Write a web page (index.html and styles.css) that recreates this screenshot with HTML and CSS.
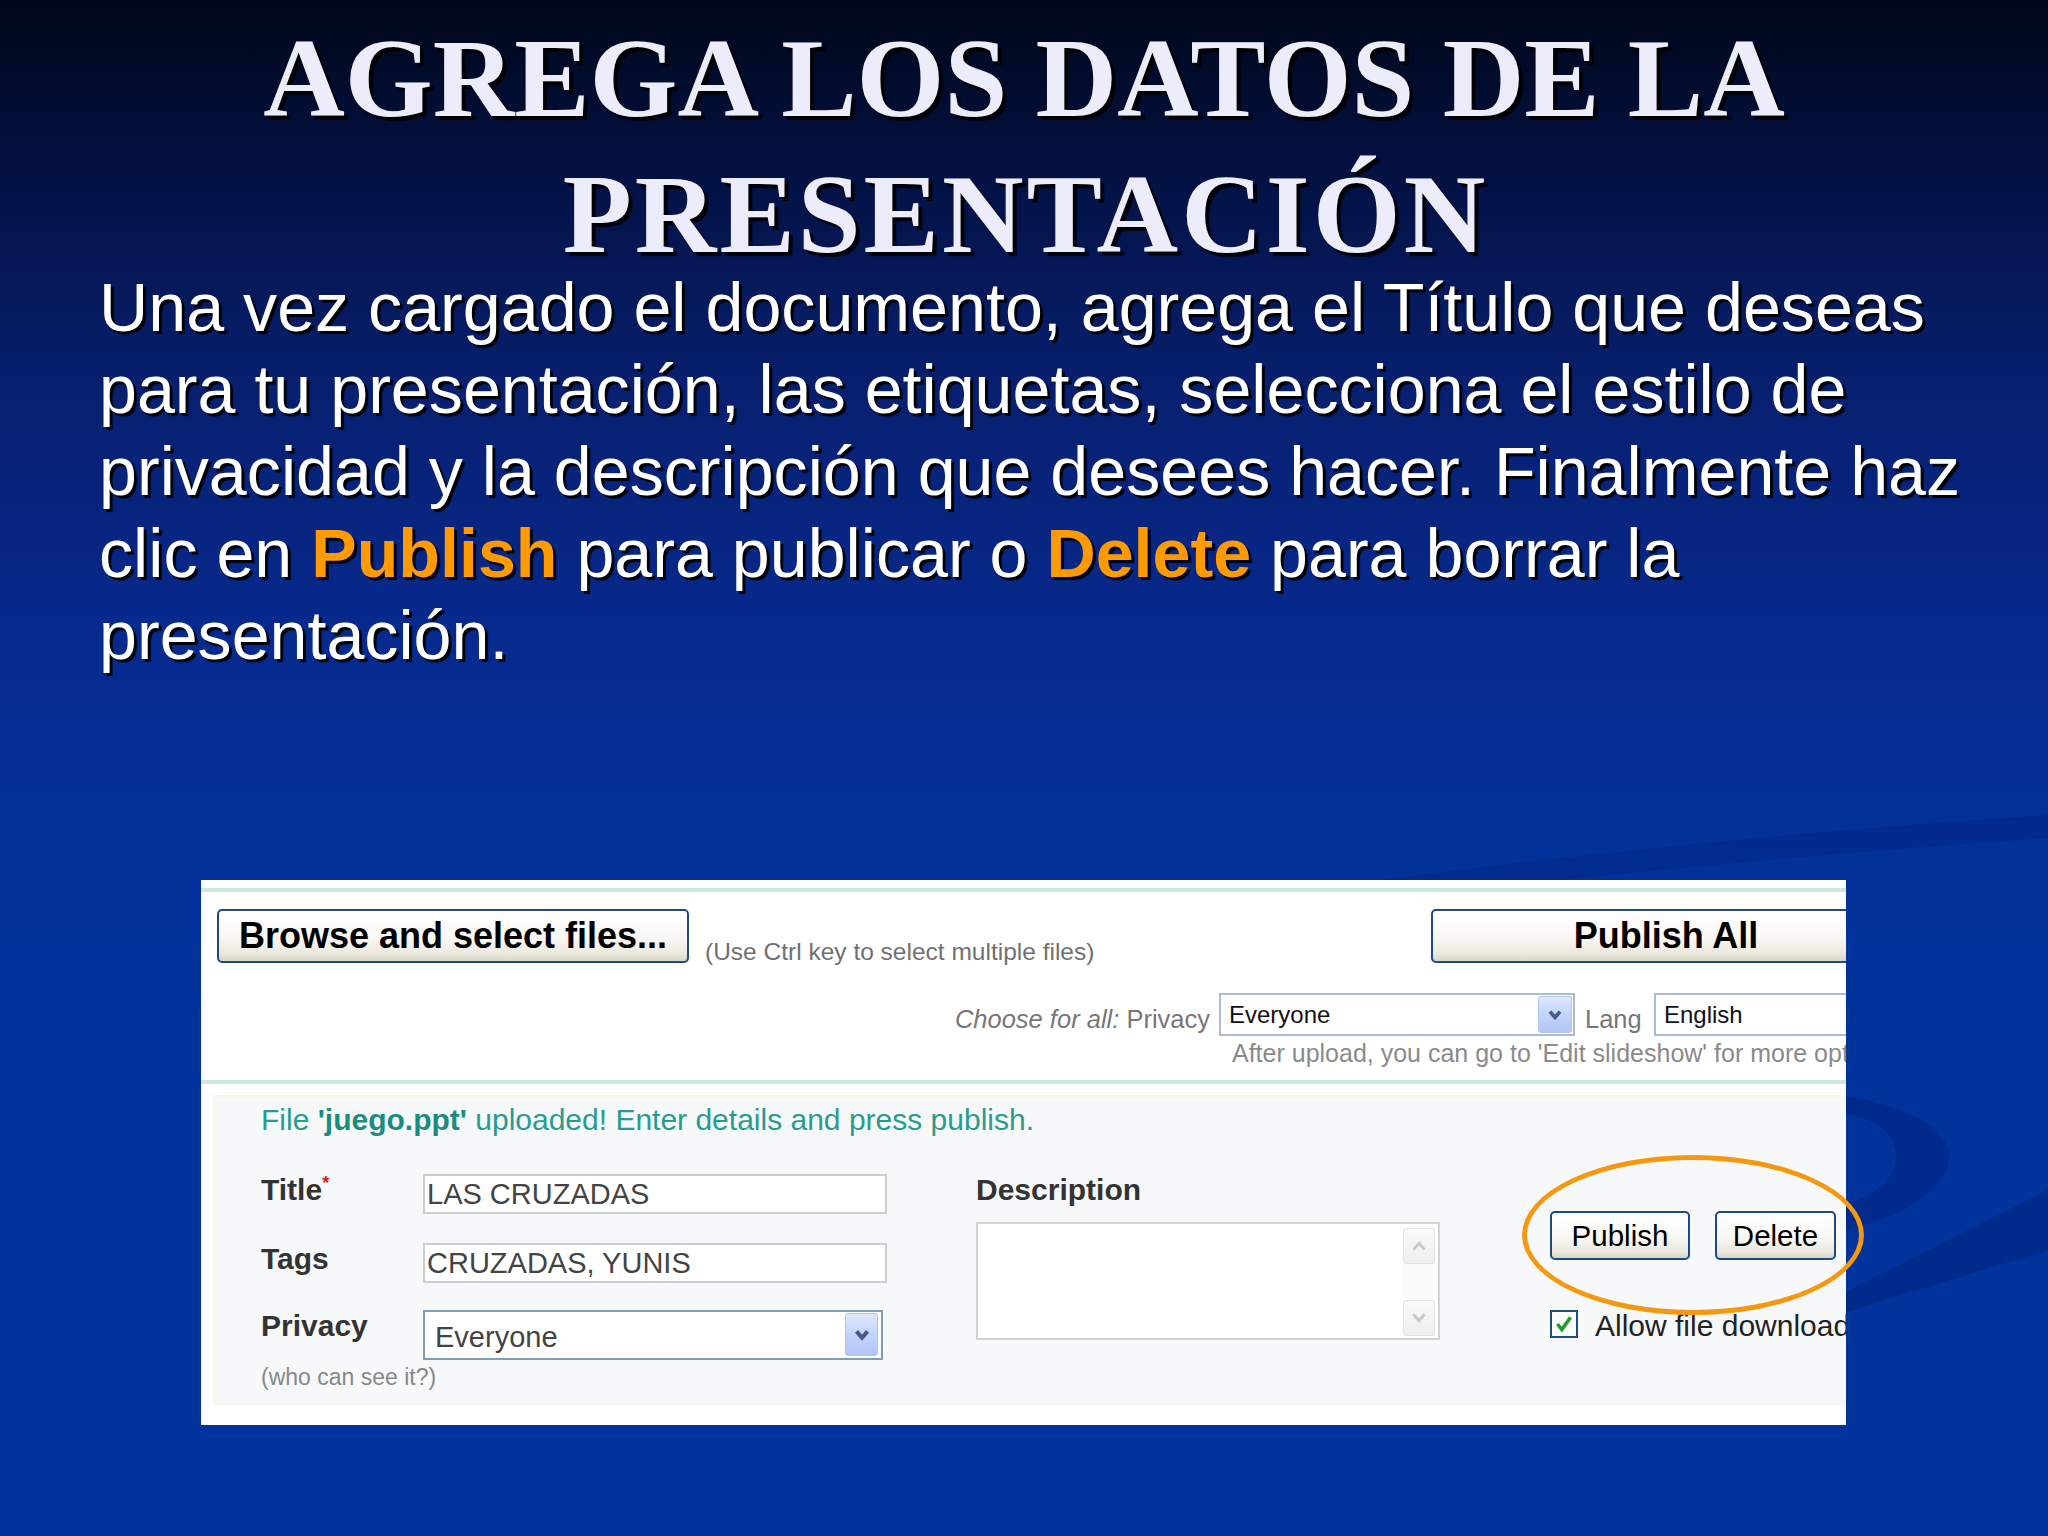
FILE: index.html
```html
<!DOCTYPE html>
<html lang="es">
<head>
<meta charset="utf-8">
<title>Agrega los datos de la presentación</title>
<link rel="stylesheet" href="styles.css">
</head>
<body>
<div class="slide">
  <svg class="swoosh" viewBox="0 0 2048 1536" width="2048" height="1536" aria-hidden="true">
    <path d="M1380 880 Q1700 838 2048 815 L2048 838 Q1700 862 1380 900 Z" fill="#001d78" opacity="0.3"/>
    <path d="M1846 1096 C1935 1110 1975 1150 1932 1190 C1910 1210 1880 1222 1846 1230 L1846 1205 C1872 1196 1895 1180 1896 1158 C1897 1132 1872 1118 1846 1114 Z" fill="#00237e" opacity="0.5"/>
    <path d="M1846 1292 L2048 1190 L2048 1250 L1846 1312 Z" fill="#00267f" opacity="0.6"/>
  </svg>

  <h1 class="title">AGREGA LOS DATOS DE LA<br><span class="title-wide">PRESENTACIÓN</span></h1>

  <p class="lead">Una vez cargado el documento, agrega el Título que deseas<br>para tu presentación, las etiquetas, selecciona el estilo de<br>privacidad y la descripción que desees hacer. Finalmente haz<br>clic en <b class="hl">Publish</b> para publicar o <b class="hl">Delete</b> para borrar la<br>presentación.</p>

  <div class="panel">
    <div class="head">
      <div class="row1">
        <span class="btn btn-big btn-browse">Browse and select files...</span>
        <span class="hint">(Use Ctrl key to select multiple files)</span>
        <span class="btn btn-big btn-all">Publish All</span>
      </div>
      <div class="row2">
        <span class="choose"><i>Choose for all:</i> Privacy</span>
        <span class="select sel-top sel-priv">
          <span class="sel-text">Everyone</span>
          <span class="drop drop-top"><svg viewBox="0 0 12 12" width="20" height="20"><polyline points="3,4 6,7.5 9,4" fill="none" stroke="#46598a" stroke-width="2.2"/></svg></span>
        </span>
        <span class="lang">Lang</span>
        <span class="select sel-top sel-lang"><span class="sel-text">English</span></span>
      </div>
      <div class="row3">After upload, you can go to 'Edit slideshow' for more options</div>
    </div>

    <div class="lower">
      <div class="box">
        <div class="status">File <b>'juego.ppt'</b> uploaded! Enter details and press publish.</div>
        <div class="form">
          <div class="col-fields">
            <div class="field">
              <span class="label">Title<sup class="req">*</sup></span>
              <span class="input">LAS CRUZADAS</span>
            </div>
            <div class="field field-gap">
              <span class="label">Tags</span>
              <span class="input">CRUZADAS, YUNIS</span>
            </div>
            <div class="field field-gap2">
              <span class="label">Privacy</span>
              <span class="select sel-form">
                <span class="sel-text">Everyone</span>
                <span class="drop drop-form"><svg viewBox="0 0 12 12" width="22" height="22"><polyline points="3,4 6,7.5 9,4" fill="none" stroke="#46598a" stroke-width="2.2"/></svg></span>
              </span>
            </div>
            <div class="who">(who can see it?)</div>
          </div>

          <div class="col-desc">
            <div class="label">Description</div>
            <div class="textarea">
              <div class="scroll">
                <span class="sbtn sbtn-up"><svg viewBox="0 0 12 12" width="22" height="22"><polyline points="3,8 6,4.5 9,8" fill="none" stroke="#c9c9c9" stroke-width="1.6"/></svg></span>
                <span class="sbtn sbtn-down"><svg viewBox="0 0 12 12" width="22" height="22"><polyline points="3,4 6,7.5 9,4" fill="none" stroke="#c9c9c9" stroke-width="1.6"/></svg></span>
              </div>
            </div>
          </div>

          <div class="col-actions">
            <div class="actions">
              <span class="btn btn-small btn-publish">Publish</span>
              <span class="btn btn-small btn-delete">Delete</span>
            </div>
            <div class="check-row">
              <span class="checkbox"><svg viewBox="0 0 20 20" width="22" height="22"><path d="M4 10 L8 15 L16 4" fill="none" stroke="#1f9e2a" stroke-width="3.2"/></svg></span>
              <span class="check-label">Allow file download</span>
            </div>
          </div>
        </div>
      </div>
    </div>
  </div>

  <div class="ring"></div>
</div>
</body>
</html>
```

FILE: styles.css
```css
html, body {
  margin: 0;
  padding: 0;
}

body {
  background: #00339c;
}

.slide {
  position: relative;
  width: 2048px;
  height: 1536px;
  overflow: hidden;
  background: linear-gradient(180deg, #000718 0%, #03103f 10%, #071f6e 25%, #07298c 40%, #03319a 55%, #00339c 70%, #00339c 100%);
}

.swoosh {
  position: absolute;
  left: 0;
  top: 0;
}

.title {
  position: relative;
  margin: 0;
  padding-top: 10px;
  font-family: "Liberation Serif", "Times New Roman", serif;
  font-weight: bold;
  font-size: 113px;
  line-height: 136px;
  text-align: center;
  color: #ececfb;
  text-shadow: 4px 4px 1px rgba(0, 0, 0, 0.9);
}

.title-wide {
  letter-spacing: 3px;
  margin-right: -3px;
}

.lead {
  position: relative;
  margin: -16px 0 0;
  padding-left: 99px;
  font-family: "Liberation Sans", Arial, sans-serif;
  font-size: 68.2px;
  line-height: 82px;
  color: #ffffff;
  white-space: nowrap;
  text-shadow: 3px 3px 1px rgba(0, 0, 0, 0.95);
}

.hl {
  color: #ff9a00;
  font-weight: bold;
}

/* ---------- panel ---------- */
.panel {
  position: relative;
  margin-top: 204px;
  margin-left: 201px;
  width: 1645px;
  height: 545px;
  overflow: hidden;
  background: #ffffff;
  padding-top: 8px;
  box-sizing: border-box;
  font-family: "Liberation Sans", Arial, sans-serif;
}

.head {
  border-top: 4px solid #cbe8df;
}

.row1 {
  display: flex;
  align-items: flex-end;
  width: 1700px;
  margin-top: 17px;
  padding-left: 16px;
  box-sizing: border-box;
}

.btn {
  display: flex;
  align-items: center;
  justify-content: center;
  box-sizing: border-box;
  border: 2px solid #1d4a84;
  border-radius: 5px;
  background: linear-gradient(180deg, #ffffff 0%, #f8f7f3 55%, #ebe8dd 85%, #d9d5c8 100%);
  color: #000;
  white-space: nowrap;
  flex-shrink: 0;
}

.btn-big {
  height: 54px;
  font-weight: bold;
  font-size: 36px;
}

.btn-browse {
  width: 472px;
}

.btn-all {
  width: 470px;
  margin-left: auto;
}

.hint {
  margin-left: 16px;
  margin-bottom: -4px;
  font-size: 24.5px;
  line-height: 30px;
  color: #707070;
  white-space: nowrap;
}

.row2 {
  display: flex;
  align-items: flex-end;
  height: 43px;
  margin-top: 30px;
  padding-left: 729px;
  white-space: nowrap;
}

.choose,
.lang {
  flex-shrink: 0;
  font-size: 25.5px;
  line-height: 30px;
  padding-bottom: 2px;
  color: #777777;
}

.choose {
  width: 280px;
  text-align: right;
}

.lang {
  margin-left: 10px;
  width: 58px;
}

.select {
  position: relative;
  display: flex;
  align-items: center;
  box-sizing: border-box;
  background: #ffffff;
  flex-shrink: 0;
}

.sel-top {
  height: 43px;
  border: 2px solid #a9bcd3;
  padding-left: 8px;
  font-size: 24px;
  color: #111;
}

.sel-priv {
  width: 356px;
  margin-left: 9px;
}

.sel-lang {
  width: 300px;
  margin-left: 11px;
}

.drop {
  position: absolute;
  display: flex;
  align-items: center;
  justify-content: center;
  box-sizing: border-box;
  border: 1px solid #b3c5ee;
  border-radius: 3px;
  background: linear-gradient(180deg, #dfe8fe 0%, #c3d3fb 50%, #b3c6f4 100%);
}

.drop-top {
  right: 1px;
  top: 1px;
  width: 34px;
  height: 37px;
}

.row3 {
  margin-top: 2px;
  padding-left: 1031px;
  font-size: 25px;
  line-height: 30px;
  color: #8a8a8a;
  white-space: nowrap;
}

/* ---------- lower section ---------- */
.lower {
  margin-top: 12px;
  border-top: 4px solid #cbe8df;
  padding: 11px 0 0 12px;
}

.box {
  height: 310px;
  margin-right: -6px;
  box-sizing: border-box;
  border: 2px solid #f6f7e2;
  background: #f6f8f9;
  padding: 5px 0 0 46px;
}

.status {
  font-size: 30px;
  line-height: 36px;
  color: #2a9c8f;
  white-space: nowrap;
}

.status b {
  color: #1b8c80;
}

.form {
  display: flex;
  align-items: flex-start;
  margin-top: 36px;
}

.col-fields {
  width: 630px;
  flex-shrink: 0;
}

.field {
  display: flex;
  align-items: flex-start;
}

.field-gap {
  margin-top: 29px;
}

.field-gap2 {
  margin-top: 27px;
}

.label {
  width: 162px;
  flex-shrink: 0;
  font-weight: bold;
  font-size: 30px;
  line-height: 32px;
  color: #333333;
  white-space: nowrap;
}

.req {
  color: #e01b1b;
  font-size: 18px;
  vertical-align: top;
  line-height: 18px;
}

.input {
  display: block;
  width: 464px;
  height: 40px;
  box-sizing: border-box;
  border: 2px solid #cdcdcd;
  background: #ffffff;
  padding-left: 2px;
  font-size: 29px;
  line-height: 36px;
  color: #444444;
  white-space: nowrap;
}

.sel-form {
  width: 460px;
  height: 50px;
  border: 2px solid #7f9db9;
  padding: 4px 0 0 10px;
  font-size: 29px;
  line-height: 34px;
  color: #444444;
}

.drop-form {
  right: 3px;
  top: 1px;
  width: 33px;
  height: 43px;
}

.who {
  margin-top: 3px;
  font-size: 23px;
  line-height: 28px;
  color: #888888;
}

.col-desc {
  margin-left: 85px;
  flex-shrink: 0;
}

.col-desc .label {
  width: auto;
}

.textarea {
  position: relative;
  margin-top: 16px;
  width: 464px;
  height: 118px;
  box-sizing: border-box;
  border: 2px solid #d3d3d3;
  background: #ffffff;
}

.scroll {
  position: absolute;
  right: 3px;
  top: 2px;
  bottom: 2px;
  width: 32px;
  background: #fbfbfb;
}

.sbtn {
  position: absolute;
  left: 0;
  width: 32px;
  height: 36px;
  display: flex;
  align-items: center;
  justify-content: center;
  box-sizing: border-box;
  border: 1px solid #e3e3e3;
  border-radius: 3px;
  background: linear-gradient(180deg, #fafafa 0%, #eeeeee 100%);
}

.sbtn-up {
  top: 2px;
}

.sbtn-down {
  bottom: 0;
}

.col-actions {
  margin-left: 110px;
  margin-top: 37px;
  flex-shrink: 0;
}

.actions {
  display: flex;
}

.btn-small {
  height: 49px;
  font-size: 29.5px;
}

.btn-publish {
  width: 140px;
}

.btn-delete {
  width: 121px;
  margin-left: 25px;
}

.check-row {
  display: flex;
  align-items: flex-start;
  margin-top: 50px;
}

.checkbox {
  width: 28px;
  height: 28px;
  box-sizing: border-box;
  border: 2px solid #1c4f80;
  background: #ffffff;
  display: flex;
  align-items: center;
  justify-content: center;
  flex-shrink: 0;
}

.check-label {
  margin-left: 17px;
  font-size: 30px;
  line-height: 32px;
  color: #222222;
  white-space: nowrap;
}

/* ---------- orange highlight ring ---------- */
.ring {
  position: absolute;
  left: 1522px;
  top: 1155px;
  width: 342px;
  height: 160px;
  box-sizing: border-box;
  border: 5px solid #f5980f;
  border-radius: 50%;
}
```
